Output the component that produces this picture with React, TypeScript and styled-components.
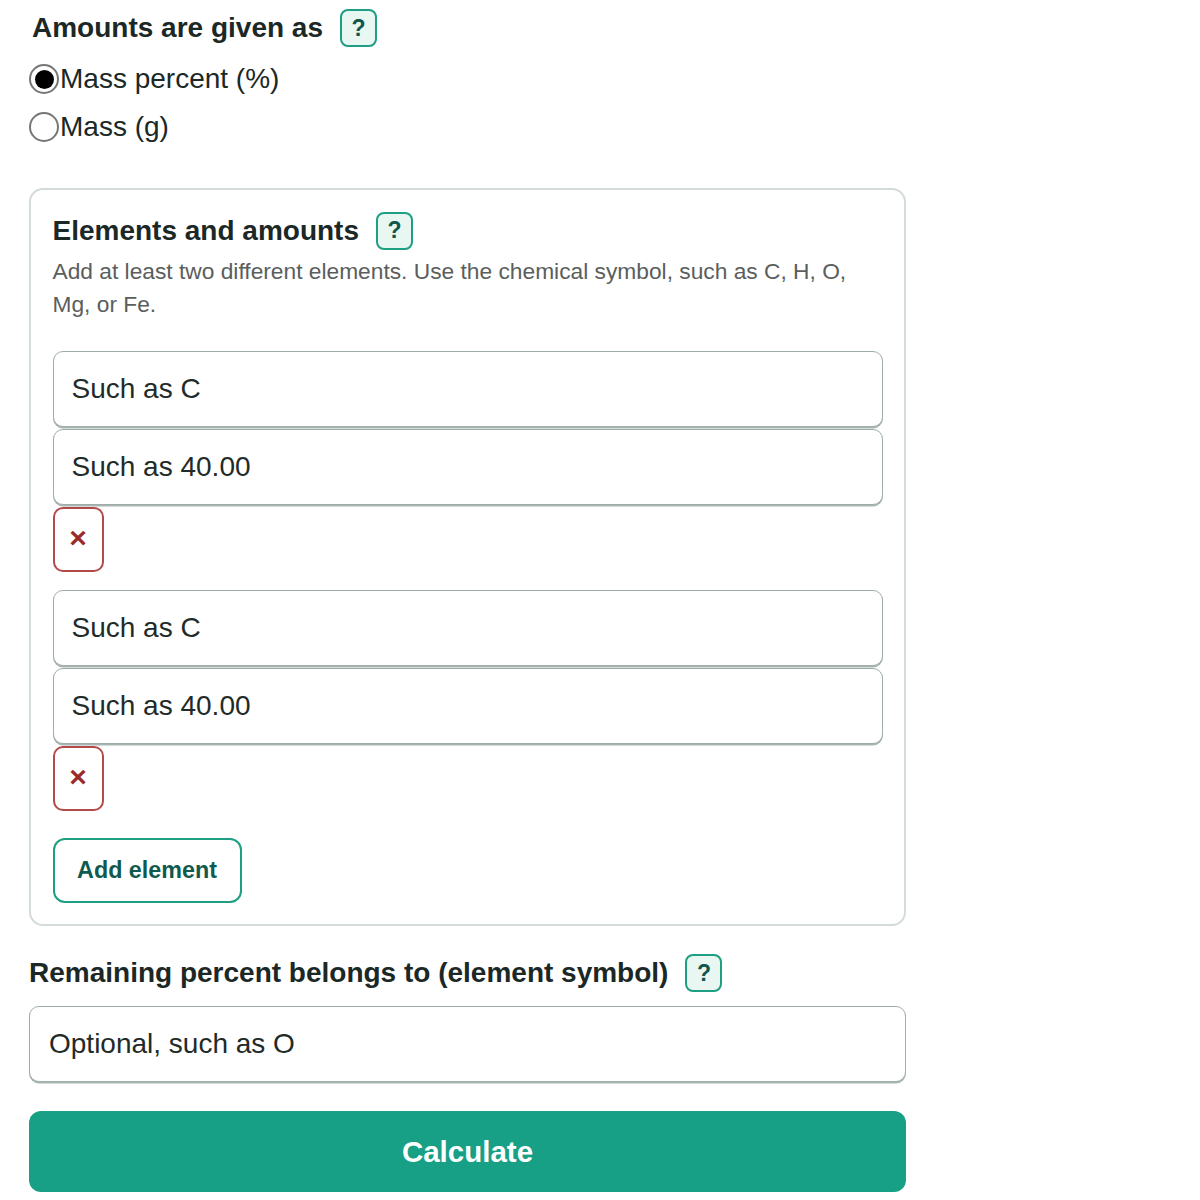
import React, { FC } from 'react'
import styled, { createGlobalStyle } from 'styled-components'

const GlobalStyle = createGlobalStyle`
  body {
    margin: 0;
    background: #ffffff;
    font-family: "Liberation Sans", Arial, sans-serif;
    color: #1b2826;
  }
  * { box-sizing: border-box; }
`

const HelpButton: FC = () => <Help type="button">?</Help>

interface ElementRowProps {
  index: number
}

const ElementRow: FC<ElementRowProps> = ({ index }) => (
  <Group>
    <TextInput placeholder="Such as C" aria-label={`Element ${index}`} />
    <TextInput placeholder="Such as 40.00" aria-label={`Amount ${index}`} />
    <RemoveButton type="button" aria-label="Remove element">
      ×
    </RemoveButton>
  </Group>
)

const App: FC = () => {
  return (
    <>
      <GlobalStyle />
      <Page>
        <Fieldset>
          <HeadingRow>
            <Heading $indent={3}>Amounts are given as</Heading>
            <HelpButton />
          </HeadingRow>
          <Options>
            <Option>
              <Radio type="radio" name="unit" defaultChecked />
              Mass percent (%)
            </Option>
            <Option>
              <Radio type="radio" name="unit" />
              Mass (g)
            </Option>
          </Options>
        </Fieldset>

        <Panel>
          <HeadingRow>
            <Heading>Elements and amounts</Heading>
            <HelpButton />
          </HeadingRow>
          <Hint>
            Add at least two different elements. Use the chemical symbol, such as C, H, O,
            Mg, or Fe.
          </Hint>
          <Rows>
            <ElementRow index={1} />
            <ElementRow index={2} />
          </Rows>
          <AddButton type="button">Add element</AddButton>
        </Panel>

        <Section>
          <HeadingRow>
            <Heading>Remaining percent belongs to (element symbol)</Heading>
            <HelpButton />
          </HeadingRow>
          <TextInput placeholder="Optional, such as O" $inset={19} />
        </Section>

        <Calculate type="button">Calculate</Calculate>
      </Page>
    </>
  )
}

const Page = styled.main`
  width: 906px;
  padding: 9px 0 20px 29px;
  display: flex;
  flex-direction: column;
`

const Fieldset = styled.div`
  display: flex;
  flex-direction: column;
  gap: 8px;
`

const HeadingRow = styled.div`
  display: flex;
  align-items: center;
  gap: 17px;
  height: 38px;
`

const Heading = styled.h2<{ $indent?: number }>`
  margin: 0;
  padding-left: ${p => p.$indent ?? 0}px;
  font-size: 28px;
  font-weight: 700;
  line-height: 38px;
  color: #1b2826;
`

const Help = styled.button`
  width: 37px;
  height: 38px;
  padding: 0;
  border: 2px solid #1e9e83;
  border-radius: 8px;
  background: #e9f7f3;
  color: #11564a;
  font-family: "Liberation Sans", Arial, sans-serif;
  font-size: 23px;
  font-weight: 700;
  line-height: 1;
  cursor: pointer;
`

const Options = styled.div`
  display: flex;
  flex-direction: column;
`

const Option = styled.label`
  display: flex;
  align-items: center;
  height: 48px;
  font-size: 28px;
  color: #1b2826;
`

const Radio = styled.input`
  appearance: none;
  margin: 0 1px 0 0;
  width: 30px;
  height: 30px;
  border: 2px solid #767676;
  border-radius: 50%;
  background: #fff;
  display: grid;
  place-items: center;

  &:checked::after {
    content: '';
    width: 19px;
    height: 19px;
    border-radius: 50%;
    background: #000;
  }
`

const Panel = styled.section`
  margin-top: 37px;
  padding: 21.5px;
  border: 2px solid #d3dcda;
  border-radius: 14px;
  display: flex;
  flex-direction: column;
`

const Hint = styled.p`
  margin: 5px 0 0 0;
  font-size: 22.75px;
  line-height: 33px;
  color: #5a5e5d;
`

const Rows = styled.div`
  margin-top: 30px;
  display: flex;
  flex-direction: column;
  gap: 18px;
`

const Group = styled.div`
  display: flex;
  flex-direction: column;
  align-items: flex-start;
  gap: 2px;
`

const TextInput = styled.input<{ $inset?: number }>`
  width: 100%;
  height: 76px;
  padding: 0 ${p => p.$inset ?? 18}px;
  border: 1.5px solid #9fadaa;
  border-radius: 10px;
  box-shadow: 0 1.5px 0 #a9b5b2;
  font-family: "Liberation Sans", Arial, sans-serif;
  font-size: 28px;
  color: #1b2826;
  background: #fff;

  &::placeholder {
    color: #1f2b29;
    opacity: 1;
  }
`

const RemoveButton = styled.button`
  width: 51px;
  height: 65px;
  padding: 0 0 2px;
  border: 2px solid #b24a4a;
  border-radius: 10px;
  background: #fff;
  color: #9a2a2a;
  font-family: "Liberation Sans", Arial, sans-serif;
  font-size: 30px;
  font-weight: 700;
  line-height: 1;
  cursor: pointer;
`

const AddButton = styled.button`
  align-self: flex-start;
  margin-top: 27px;
  width: 189px;
  height: 65px;
  border: 2px solid #1e9e83;
  border-radius: 12px;
  background: #fff;
  color: #0f5a4c;
  font-family: "Liberation Sans", Arial, sans-serif;
  font-size: 23.3px;
  font-weight: 700;
  cursor: pointer;
`

const Section = styled.section`
  margin-top: 28px;
  display: flex;
  flex-direction: column;
  gap: 14px;
`

const Calculate = styled.button`
  margin-top: 29px;
  width: 100%;
  height: 81px;
  border: none;
  border-radius: 12px;
  background: #17a085;
  color: #ffffff;
  font-family: "Liberation Sans", Arial, sans-serif;
  font-size: 29.5px;
  font-weight: 700;
  cursor: pointer;
`

export default App
